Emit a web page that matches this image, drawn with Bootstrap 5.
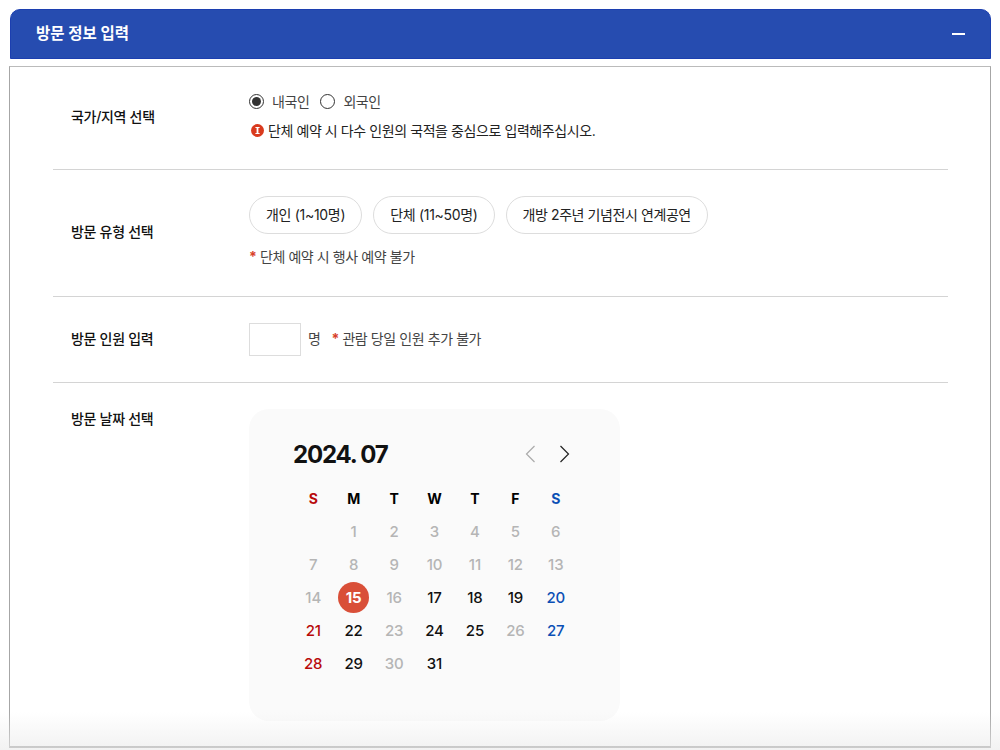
<!DOCTYPE html>
<html lang="ko"><head><meta charset="utf-8"><title>방문 정보 입력</title>
<link href="https://cdn.jsdelivr.net/npm/bootstrap@5.3.0/dist/css/bootstrap.min.css" rel="stylesheet">
<style>
html,body{height:750px;overflow:hidden;background:#fff}
body{font-family:Inter,"Noto Sans CJK KR",sans-serif;color:#111;letter-spacing:-.04em}
.shell{position:relative;height:750px;padding:8.5px 9px 0 10px}
.head-bar{height:50px;background:#264cb0;border:1px solid #1c3fb0;border-radius:10px 10px 0 0;color:#fff;font-size:15.5px;font-weight:700;padding:0 25px;letter-spacing:0}
.minus-mark{width:13px;height:2px;background:#fff}
.panel-box{margin:7px 0 0 -1px;height:682px;border:1px solid #a6a6a6;border-top-color:#bbb;border-bottom:2px solid #999;padding:0 42px 0 43px}
.form-line{border-bottom:1px solid #d4d4d4;padding-left:18px}
.line-a{height:103px}.line-b{height:127px}.line-c{height:86px}
.line-d{border-bottom:0;padding-top:26px}
.lbl{width:178px;font-size:14px;font-weight:500;flex:none;color:#111;letter-spacing:-.022em;margin-top:-2px}
.line-d .lbl{margin-top:-1px}
.radio-dot{width:15px;height:15px;border:1px solid #333;border-radius:50%;background:#fff;display:inline-flex;align-items:center;justify-content:center}
.radio-dot.on::after{content:"";width:9px;height:9px;border-radius:50%;background:#333}
.radio-next{margin-left:3px}
.opt-text{font-size:14px;color:#444;letter-spacing:-.03em}
.radio-row{height:18px;gap:8px;margin-top:-3px}
.note-main{font-size:14px;color:#222;margin-top:11px;line-height:18px;gap:4px;margin-left:2px;letter-spacing:-.03em}
.pill-col{align-self:flex-start;padding-top:26px}
.pill-btn{height:38px;border:1px solid #ddd;border-radius:19px;background:#fff;font-size:14px;color:#222;padding:0 16px;letter-spacing:-.022em}
.pill-btn.pill-long{letter-spacing:-.03em}
.pill-gap{gap:11px}
.star{color:#d8412a;font-weight:700}
.note-sub{font-size:14px;color:#444;margin-top:14px;line-height:18px;letter-spacing:-.03em}
.count-box{width:52px;height:33px;border:1px solid #ddd;background:#fff;margin-right:7px}
.count-text{margin-top:-1px}
.count-note{margin-left:11px}
.cal-box{width:371px;height:312px;background:#fafafa;border-radius:20px;padding:28px 44px 0}
.cal-title{font-size:24px;font-weight:700;line-height:34px;color:#111;letter-spacing:-.05em;padding-top:1px}
.cal-arrows{gap:23px;margin-right:6px}
.cal-grid{display:grid;grid-template-columns:repeat(7,1fr);grid-auto-rows:33.2px;margin-top:10px;font-size:15px;font-weight:500;text-align:center;letter-spacing:-.01em;line-height:33px;color:#111}
.dow{font-weight:700;font-size:14px;color:#000;line-height:33px}
.dim{color:#b5b5b5}.sun{color:#b80a0a}.sat{color:#0b4fb5}
.dow.sun{color:#b80a0a}.dow.sat{color:#0b4fb5}
.today{position:relative;color:#fff;font-weight:700;z-index:0}
.today::before{content:"";position:absolute;left:50%;top:1px;width:31px;height:31px;margin:0 0 0 -15.5px;border-radius:50%;background:#d94f38;z-index:-1}
.fade-foot{position:absolute;left:0;right:0;bottom:0;height:38px;background:linear-gradient(rgba(235,235,235,0),rgba(235,235,235,.65));pointer-events:none}
</style></head><body>
<div class="shell">
<div class="head-bar d-flex align-items-center justify-content-between"><span>방문 정보 입력</span><span class="minus-mark"></span></div>
<div class="panel-box">
<div class="form-line line-a d-flex align-items-center">
<div class="lbl">국가/지역 선택</div>
<div>
<div class="radio-row d-flex align-items-center"><span class="radio-dot on"></span><span class="opt-text">내국인</span><span class="radio-dot radio-next"></span><span class="opt-text">외국인</span></div>
<div class="note-main d-flex align-items-center"><svg width="13" height="13" viewBox="0 0 13 13"><circle cx="6.5" cy="6.5" r="6.5" fill="#d93a1e"/><rect x="5.6" y="3" width="1.8" height="7" fill="#fff"/><rect x="4.4" y="3" width="4.2" height="1" fill="#fff"/><rect x="4.4" y="9" width="4.2" height="1" fill="#fff"/></svg><span>단체 예약 시 다수 인원의 국적을 중심으로 입력해주십시오.</span></div>
</div></div>
<div class="form-line line-b d-flex align-items-center">
<div class="lbl">방문 유형 선택</div>
<div class="pill-col">
<div class="d-flex pill-gap"><button type="button" class="pill-btn">개인 (1~10명)</button><button type="button" class="pill-btn">단체 (11~50명)</button><button type="button" class="pill-btn pill-long">개방 2주년 기념전시 연계공연</button></div>
<div class="note-sub"><span class="star">*</span> 단체 예약 시 행사 예약 불가</div>
</div></div>
<div class="form-line line-c d-flex align-items-center">
<div class="lbl">방문 인원 입력</div>
<div class="d-flex align-items-center"><div class="count-box"></div><span class="opt-text count-text">명</span><span class="opt-text count-text count-note"><span class="star">*</span> 관람 당일 인원 추가 불가</span></div>
</div>
<div class="form-line line-d d-flex align-items-start">
<div class="lbl">방문 날짜 선택</div>
<div class="cal-box">
<div class="d-flex align-items-center justify-content-between"><span class="cal-title">2024. 07</span>
<div class="d-flex cal-arrows"><svg width="11" height="18" viewBox="0 0 11 18"><path d="M9.5 1 1.5 9l8 8" fill="none" stroke="#aaa" stroke-width="1.2"/></svg><svg width="11" height="18" viewBox="0 0 11 18"><path d="M1.5 1l8 8-8 8" fill="none" stroke="#222" stroke-width="1.2"/></svg></div></div>
<div class="cal-grid">
<span class="dow sun">S</span><span class="dow">M</span><span class="dow">T</span><span class="dow">W</span><span class="dow">T</span><span class="dow">F</span><span class="dow sat">S</span>
<span></span><span class="dim">1</span><span class="dim">2</span><span class="dim">3</span><span class="dim">4</span><span class="dim">5</span><span class="dim">6</span>
<span class="dim">7</span><span class="dim">8</span><span class="dim">9</span><span class="dim">10</span><span class="dim">11</span><span class="dim">12</span><span class="dim">13</span>
<span class="dim">14</span><span class="today">15</span><span class="dim">16</span><span>17</span><span>18</span><span>19</span><span class="sat">20</span>
<span class="sun">21</span><span>22</span><span class="dim">23</span><span>24</span><span>25</span><span class="dim">26</span><span class="sat">27</span>
<span class="sun">28</span><span>29</span><span class="dim">30</span><span>31</span>
</div></div></div>
</div>
<div class="fade-foot"></div>
</div>
<script src="https://cdn.jsdelivr.net/npm/bootstrap@5.3.0/dist/js/bootstrap.bundle.min.js"></script>
</body></html>
